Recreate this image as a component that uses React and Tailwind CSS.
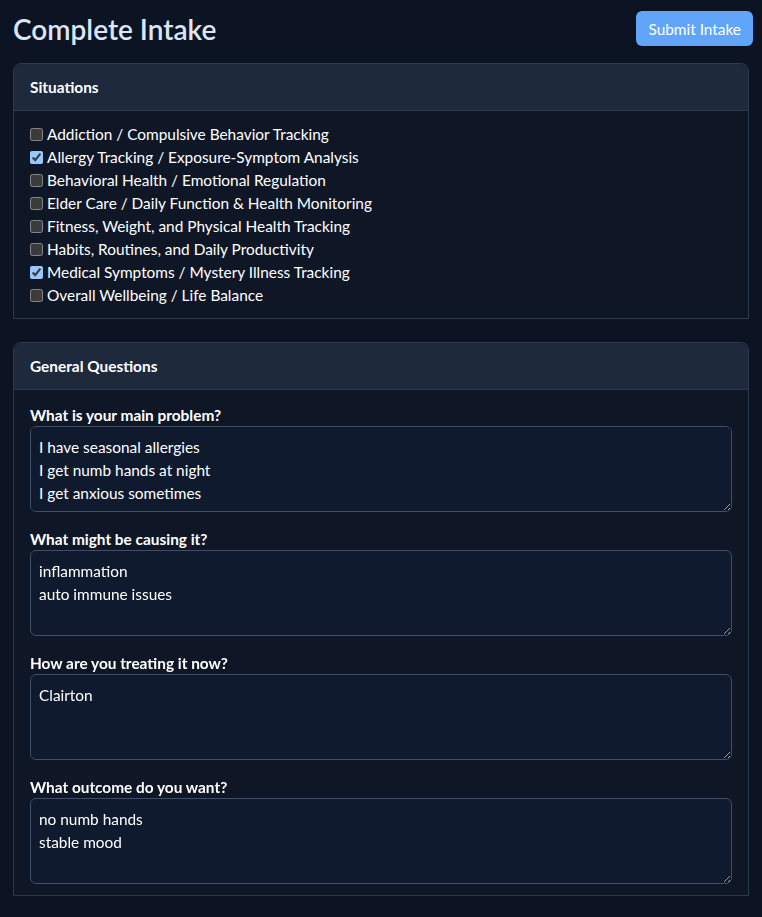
import React, { useState } from 'react';

const situations = [
	{ label: 'Addiction / Compulsive Behavior Tracking', checked: false },
	{ label: 'Allergy Tracking / Exposure-Symptom Analysis', checked: true },
	{ label: 'Behavioral Health / Emotional Regulation', checked: false },
	{ label: 'Elder Care / Daily Function & Health Monitoring', checked: false },
	{ label: 'Fitness, Weight, and Physical Health Tracking', checked: false },
	{ label: 'Habits, Routines, and Daily Productivity', checked: false },
	{ label: 'Medical Symptoms / Mystery Illness Tracking', checked: true },
	{ label: 'Overall Wellbeing / Life Balance', checked: false },
];

const questions = [
	{ label: 'What is your main problem?', value: 'I have seasonal allergies\nI get numb hands at night\nI get anxious sometimes' },
	{ label: 'What might be causing it?', value: 'inflammation\nauto immune issues' },
	{ label: 'How are you treating it now?', value: 'Clairton' },
	{ label: 'What outcome do you want?', value: 'no numb hands\nstable mood' },
];

function Card({ title, children }) {
	return (
		<div className="rounded-t-lg border border-[#2c3a4f] bg-[#0f1727]">
			<div className="rounded-t-lg border-b border-[#2c3a4f] bg-[#1e293b] px-4 py-[13px]">
				<h2 className="text-[15.4px] font-bold leading-5 text-white">{title}</h2>
			</div>
			{children}
		</div>
	);
}

export default function App() {
	const [checks, setChecks] = useState(situations.map(s => s.checked));
	const [answers, setAnswers] = useState(questions.map(q => q.value));

	return (
		<div
			className="min-h-screen bg-[#0c1423] px-[13px] pb-6 text-[#e5e7eb] [color-scheme:dark]"
			style={{ fontFamily: 'Lato, "Noto Sans", sans-serif' }}
		>
			<div className="flex items-start justify-between pt-[11px]">
				<h1 className="text-[28px] font-semibold leading-[36px] text-[#dce7f5]">Complete Intake</h1>
				<button className="mr-[-4px] h-[35px] rounded-md bg-[#60a5fa] px-3 text-[15.4px] leading-5 text-white">
					Submit Intake
				</button>
			</div>

			<div className="mt-[16px]">
				<Card title="Situations">
					<div className="flex flex-col px-4 pt-[12px] pb-[11px]">
						{situations.map((s, i) => (
							<label key={s.label} className="flex h-[23px] items-center gap-[4px] text-[15.4px] text-white">
								<input
									type="checkbox"
									checked={checks[i]}
									onChange={() => setChecks(c => c.map((v, j) => (j === i ? !v : v)))}
									className="m-0 h-[13px] w-[13px]"
								/>
								{s.label}
							</label>
						))}
					</div>
				</Card>
			</div>

			<div className="mt-[23px]">
				<Card title="General Questions">
					<div className="flex flex-col gap-[17px] px-4 pt-[15px] pb-[11px]">
						{questions.map((q, i) => (
							<div key={q.label} className="flex flex-col">
								<label className="text-[15.4px] font-bold leading-5 text-white">{q.label}</label>
								<textarea
									rows={3}
									value={answers[i]}
									onChange={e => setAnswers(a => a.map((v, j) => (j === i ? e.target.value : v)))}
									className="mt-[1px] h-[86px] w-full rounded-md border border-[#3d4d6b] bg-[#0f1a2e] px-2 pt-[9px] pb-[8px] text-[15.4px] leading-[23px] text-white outline-none"
								/>
							</div>
						))}
					</div>
				</Card>
			</div>
		</div>
	);
}
